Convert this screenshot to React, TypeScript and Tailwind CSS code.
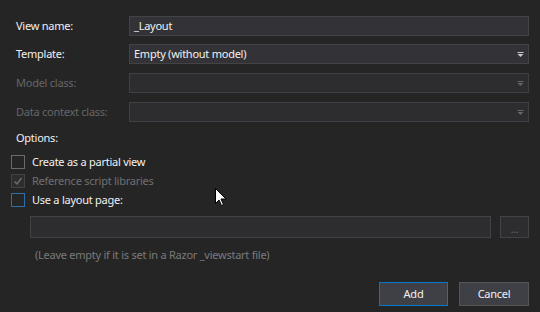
import React from "react";

const Arrow = ({ dim }: { dim?: boolean }) => (
  <svg width="7" height="6" viewBox="0 0 7 6" className="absolute right-[4px] top-[7px]">
    <rect x="0.5" y="0" width="6" height="1" fill={dim ? "#666666" : "#c8c8c8"} />
    <path d="M0.5 2 L6.5 2 L3.5 5 Z" fill={dim ? "#666666" : "#c8c8c8"} />
  </svg>
);

export default function App() {
  return (
    <div
      className="relative w-[540px] h-[312px] bg-[#252526] text-[11px] tracking-[-0.25px] text-[#f1f1f1] overflow-hidden"
      style={{ fontFamily: '"Noto Sans", "Open Sans", sans-serif' }}
    >
      <div className="pt-[16px] pl-[16px] pr-[11px]">
        <div className="flex items-center h-[20px]">
          <div className="w-[113px] leading-[16px]">View name:</div>
          <div className="flex-1 h-[20px] bg-[#333337] border border-[#434346] pl-[4px] leading-[18px]">_Layout</div>
        </div>
        <div className="flex items-center h-[20px] mt-[8px]">
          <div className="w-[113px] leading-[16px]">Template:</div>
          <div className="relative flex-1 h-[20px] bg-[#333337] border border-[#434346] pl-[4px] leading-[18px]">
            Empty (without model)
            <Arrow />
          </div>
        </div>
        <div className="flex items-center h-[20px] mt-[9px]">
          <div className="w-[113px] leading-[16px] text-[#666666]">Model class:</div>
          <div className="relative flex-1 h-[20px] bg-[#2d2d30] border border-[#3f3f46]">
            <Arrow dim />
          </div>
        </div>
        <div className="flex items-center h-[20px] mt-[9px]">
          <div className="w-[113px] leading-[16px] text-[#666666]">Data context class:</div>
          <div className="relative flex-1 h-[20px] bg-[#2d2d30] border border-[#3f3f46]">
            <Arrow dim />
          </div>
        </div>

        <div className="mt-[8px] h-[16px] leading-[16px]">Options:</div>

        <div className="-ml-[5px] mt-[6px]">
          <div className="flex items-center h-[19px]">
            <div className="w-[14px] h-[14px] border border-[#6a6a6a] bg-[#252526]" />
            <span className="ml-[7px] leading-[16px]">Create as a partial view</span>
          </div>
          <div className="flex items-center h-[19px]">
            <div className="w-[14px] h-[14px] border border-[#434346] bg-[#2d2d30] flex items-center justify-center">
              <svg width="10" height="10" viewBox="0 0 10 10">
                <path d="M1.5 5.5 L4 8 L8.5 2" stroke="#6e6e6e" strokeWidth="1.4" fill="none" />
              </svg>
            </div>
            <span className="ml-[7px] leading-[16px] text-[#707070]">Reference script libraries</span>
          </div>
          <div className="flex items-center h-[19px]">
            <div className="w-[14px] h-[14px] border border-[#2f6ea8] bg-[#252526]" />
            <span className="ml-[7px] leading-[16px]">Use a layout page:</span>
          </div>
        </div>

        <div className="flex ml-[14px] mt-[7px] h-[22px]">
          <div className="w-[461px] h-[22px] bg-[#2d2d30] border border-[#434346]" />
          <div className="ml-[9px] w-[29px] h-[22px] bg-[#2d2d30] border border-[#434346] flex items-end justify-center pb-[3px]">
            <span className="text-[10px] leading-[10px] text-[#6a6a6a]">...</span>
          </div>
        </div>

        <div className="ml-[19px] mt-[9px] h-[16px] leading-[16px] text-[#7a7a7a]">
          (Leave empty if it is set in a Razor _viewstart file)
        </div>

        <div className="flex justify-end mt-[19px] gap-[11px]">
          <div className="w-[69px] h-[24px] bg-[#3f3f46] border border-[#007acc] flex items-center justify-center">Add</div>
          <div className="w-[70px] h-[24px] bg-[#3f3f46] border border-[#555555] flex items-center justify-center">Cancel</div>
        </div>
      </div>

      <svg className="absolute left-[215px] top-[188px]" width="12" height="19" viewBox="0 0 12 19">
        <path d="M0.5 0.5 L0.5 15.5 L4 12 L6.5 17.5 L8.5 16.5 L6 11 L11 11 Z" fill="#ffffff" stroke="#000000" strokeWidth="1" />
      </svg>
    </div>
  );
}
